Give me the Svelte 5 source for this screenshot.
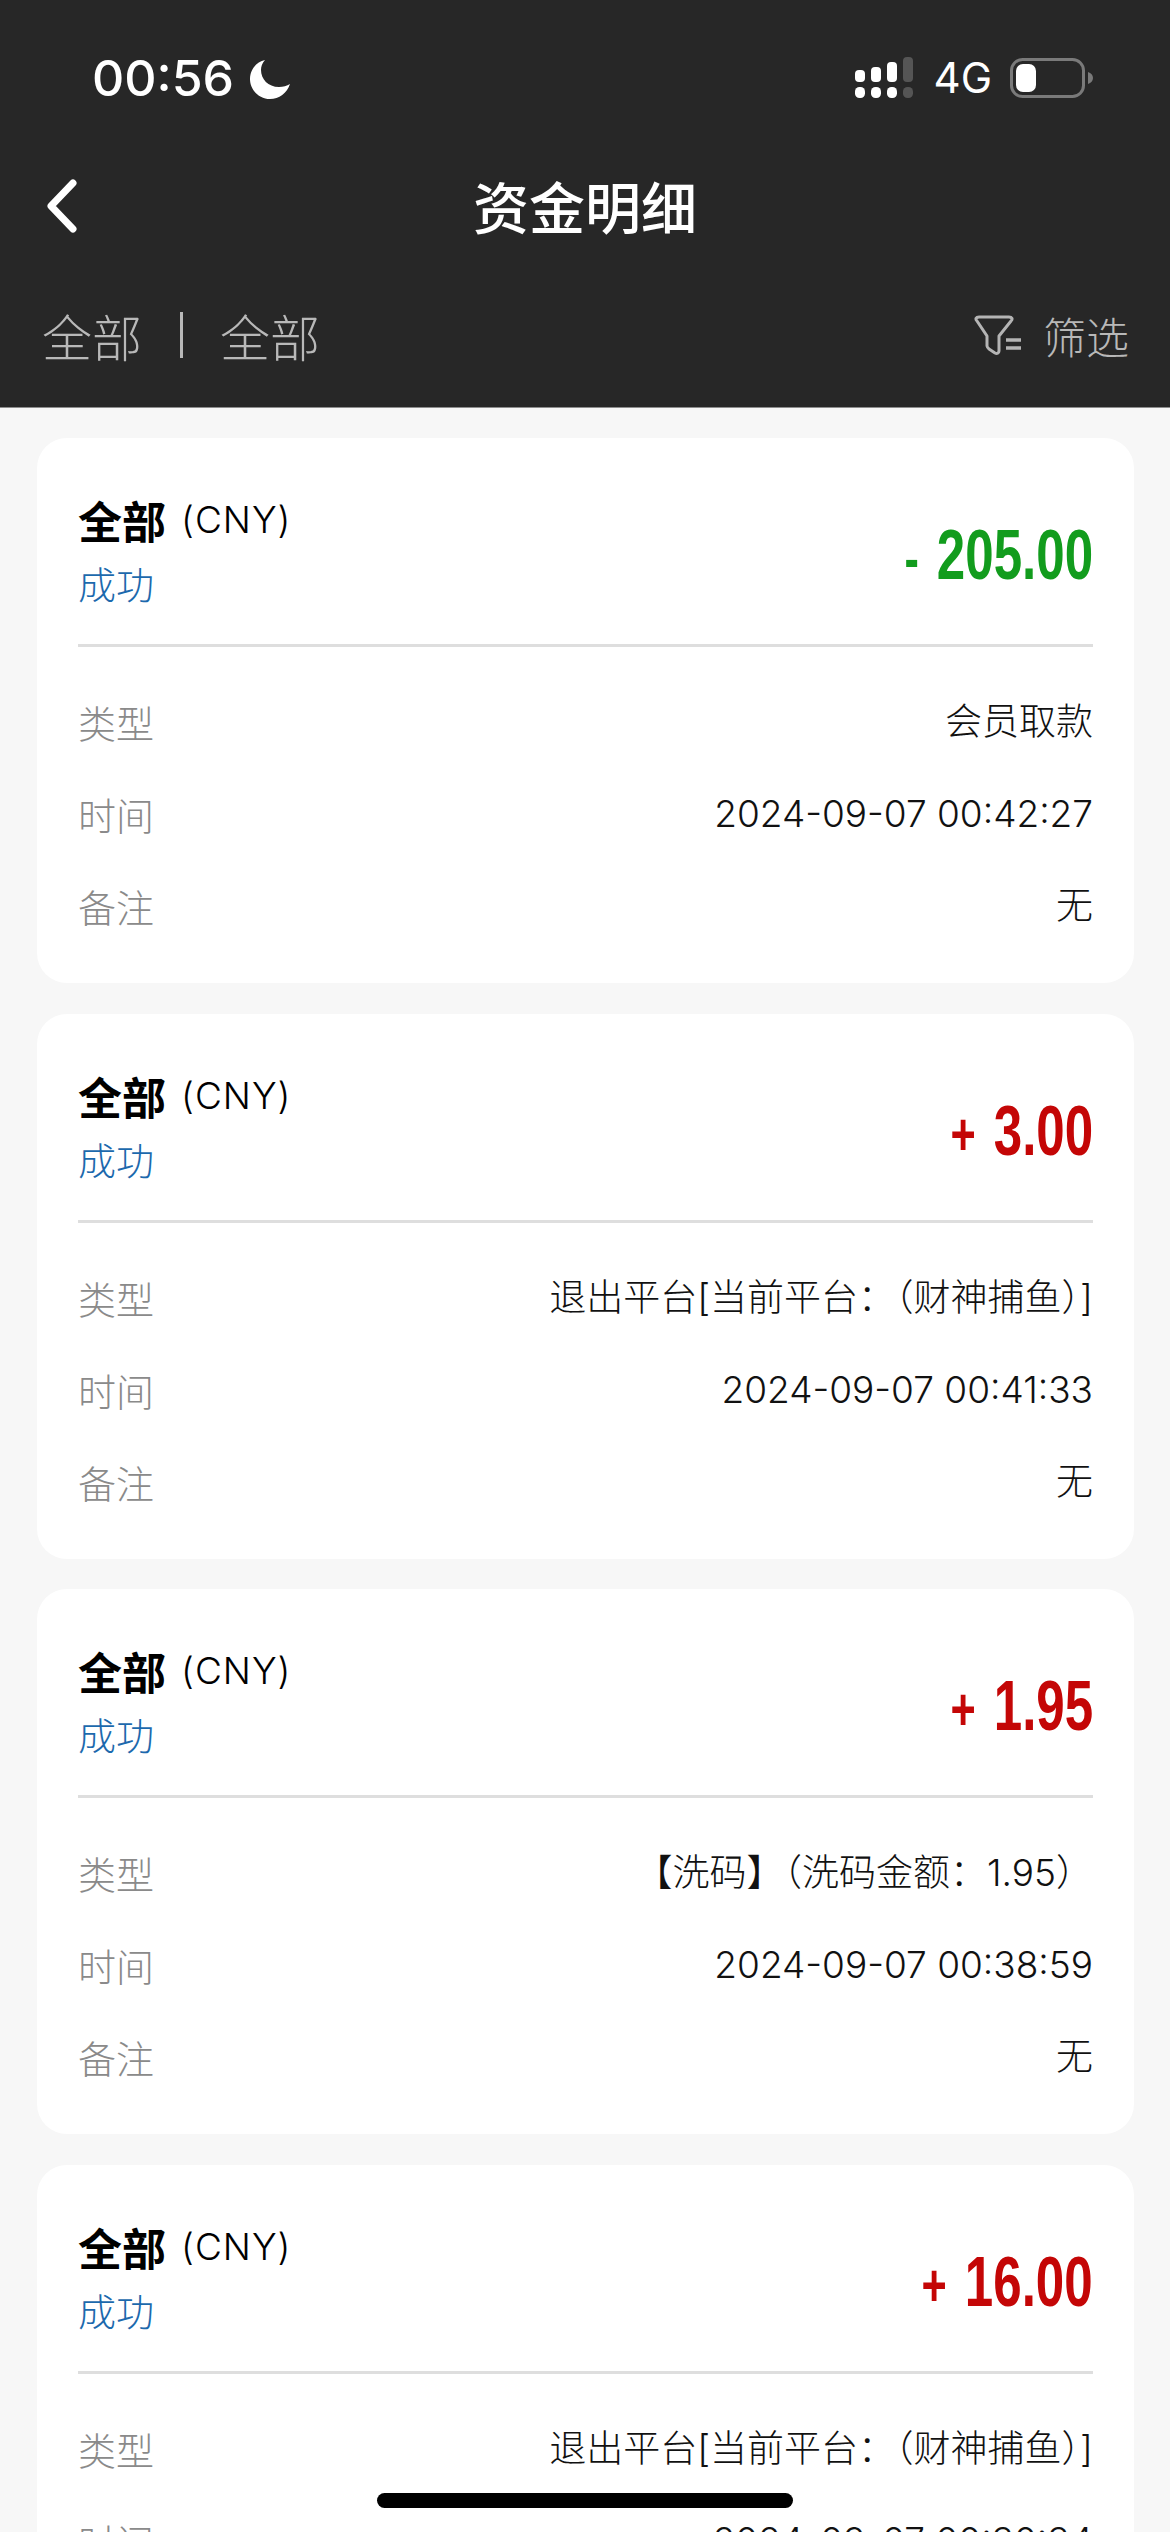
<script>
	const records = [
		{ sign: '-', value: '205.00', kind: 'out', type: '会员取款', time: '2024-09-07 00:42:27' },
		{ sign: '+', value: '3.00', kind: 'in', type: '退出平台[当前平台：（财神捕鱼）]', time: '2024-09-07 00:41:33' },
		{ sign: '+', value: '1.95', kind: 'in', type: '【洗码】（洗码金额：1.95）', time: '2024-09-07 00:38:59' },
		{ sign: '+', value: '16.00', kind: 'in', type: '退出平台[当前平台：（财神捕鱼）]', time: '2024-09-07 00:30:34' }
	];
	const signalTops = [70, 67, 62, 57];
</script>

<div class="page">
	<header class="header">
		<div class="status">
			<div class="clock">
				<span>00:56</span>
				<svg class="moon" viewBox="0 0 40 40" width="40" height="40">
					<path d="M15 1C6 3 0 11 0 20c0 11 9 20 20 20 9 0 17-6 20-15-3 2-7 3-11 3-11 0-18-8-18-17 0-3 1-7 4-10z" fill="#fff" />
				</svg>
			</div>
			<div class="status-right">
				<svg class="signal" viewBox="855 55 60 45" width="60" height="45">
					{#each signalTops as top, i}
						<rect x={855 + i * 16} y={top} width="10" height={82 - top} rx="4" fill={i == 3 ? '#555' : '#fff'} />
						<rect x={855 + i * 16} y="87" width="10" height="11" rx="4.5" fill={i == 3 ? '#555' : '#fff'} />
					{/each}
				</svg>
				<span class="net">4G</span>
				<svg class="battery" viewBox="0 0 84 40" width="84" height="40">
					<rect x="1.5" y="1.5" width="72" height="37" rx="11" fill="none" stroke="#7a7a7a" stroke-width="3" />
					<rect x="6" y="6" width="20" height="28" rx="7" fill="#fff" />
					<path d="M78 14c3 1 5 3 5 6s-2 5-5 6z" fill="#7a7a7a" />
				</svg>
			</div>
		</div>
		<div class="nav">
			<svg class="back" viewBox="0 0 40 60" width="40" height="60">
				<path d="M29 7 7 30l22 23" fill="none" stroke="#fff" stroke-width="7" stroke-linecap="round" stroke-linejoin="round" />
			</svg>
			<div class="title">资金明细</div>
		</div>
		<div class="filters">
			<div class="filter-left">
				<span>全部</span>
				<i class="bar"></i>
				<span>全部</span>
			</div>
			<div class="filter-right">
				<svg viewBox="0 0 48 40" width="48" height="40">
					<path d="M5 2h30c3 0 4 2 2 4L25 21v15c0 2-2 3-4 2l-6-4c-1-1-2-2-2-3V21L3 6C1 4 2 2 5 2z" fill="none" stroke="#b4b4b4" stroke-width="3" stroke-linejoin="round" />
					<path d="M32 25h15M32 33h15" stroke="#b4b4b4" stroke-width="3.5" />
				</svg>
				<span>筛选</span>
			</div>
		</div>
	</header>

	<main class="list">
		{#each records as r}
			<section class="card">
				<div class="card-top">
					<div>
						<div class="currency"><b>全部</b><span>(CNY)</span></div>
						<div class="state">成功</div>
					</div>
					<div class="amount {r.kind}"><span class="sign">{r.sign}</span>{r.value}</div>
				</div>
				<div class="rows">
					<div class="row"><span>类型</span><em>{r.type}</em></div>
					<div class="row"><span>时间</span><em>{r.time}</em></div>
					<div class="row"><span>备注</span><em>无</em></div>
				</div>
			</section>
		{/each}
	</main>

	<div class="home-bar"></div>
</div>

<style>
	:global(body) {
		margin: 0;
		background: #f7f7f7;
	}
	.page {
		position: relative;
		height: 2532px;
		overflow: hidden;
		background: #f7f7f7;
		font-family: 'Noto Sans CJK SC', 'Inter', sans-serif;
	}
	.header {
		box-sizing: border-box;
		background: #272727;
		border-bottom: 1px solid #8d8d8d;
		height: 408px;
	}
	.status {
		height: 155px;
		display: flex;
		justify-content: space-between;
		align-items: flex-start;
		padding: 55px 76px 0 92px;
		box-sizing: border-box;
	}
	.clock {
		display: flex;
		align-items: center;
		gap: 16px;
		color: #fff;
		font: 500 50px/46px 'Inter', sans-serif;
	}
	.moon {
		display: block;
		margin-top: 2px;
	}
	.status-right {
		display: flex;
		align-items: center;
		height: 45px;
	}
	.signal {
		display: block;
	}
	.net {
		margin: 0 18px 0 19px;
		color: #fff;
		font: 400 42px/45px 'Inter', sans-serif;
	}
	.battery {
		display: block;
	}
	.nav {
		height: 102px;
		position: relative;
		display: flex;
		align-items: center;
		justify-content: center;
	}
	.back {
		position: absolute;
		left: 44px;
		top: 21px;
	}
	.title {
		margin-top: -2px;
		color: #fff;
		font-size: 56px;
		font-weight: 500;
		line-height: 70px;
	}
	.filters {
		height: 150px;
		display: flex;
		justify-content: space-between;
		padding: 48px 41px 0 42px;
		box-sizing: border-box;
		color: #b8b8b8;
	}
	.filter-left {
		display: flex;
		align-items: center;
		height: 60px;
		font-size: 50px;
		font-weight: 300;
	}
	.bar {
		width: 3px;
		height: 46px;
		margin: 0 37px 0 38px;
		background: #b8b8b8;
	}
	.filter-right {
		display: flex;
		align-items: center;
		height: 60px;
		gap: 21px;
		font-size: 43px;
		font-weight: 200;
	}
	.filter-right svg {
		display: block;
	}
	.list {
		display: flex;
		flex-direction: column;
		gap: 30.5px;
		padding: 30px 36px 0 37px;
	}
	.card {
		height: 545px;
		flex: none;
		box-sizing: border-box;
		padding: 0 41px;
		background: #fff;
		border-radius: 30px;
	}
	.card-top {
		height: 209px;
		box-sizing: border-box;
		padding-top: 57px;
		display: flex;
		justify-content: space-between;
		border-bottom: 3px solid #dedede;
	}
	.currency {
		display: flex;
		align-items: center;
		height: 50px;
		color: #000;
	}
	.currency b {
		font-size: 44px;
		font-weight: 700;
	}
	.currency span {
		margin-left: 15px;
		letter-spacing: 1px;
		font: 300 37px/50px 'Inter', sans-serif;
	}
	.state {
		margin-top: 13px;
		color: #1c69ad;
		font-size: 38px;
		font-weight: 300;
		line-height: 50px;
	}
	.amount {
		margin-top: 5px;
		transform: scaleX(0.72);
		transform-origin: right center;
		white-space: nowrap;
		font: 700 71px/110px 'Liberation Sans', sans-serif;
	}
	.amount .sign {
		margin-right: 25px;
		font-size: 60px;
		font-weight: 700;
	}
	.out {
		color: #129c1d;
	}
	.in {
		color: #c40606;
	}
	.rows {
		padding-top: 50px;
		display: flex;
		flex-direction: column;
		gap: 42px;
	}
	.row {
		display: flex;
		justify-content: space-between;
		height: 50px;
		line-height: 50px;
		font-size: 38px;
		font-weight: 300;
		color: #8a8a8a;
	}
	.row em {
		font-style: normal;
		color: #111;
		font-family: 'Inter', 'Noto Sans CJK SC', sans-serif;
		font-size: 37px;
	}
	.home-bar {
		position: absolute;
		left: 377px;
		top: 2493px;
		width: 416px;
		height: 15px;
		border-radius: 8px;
		background: #000;
	}
</style>
